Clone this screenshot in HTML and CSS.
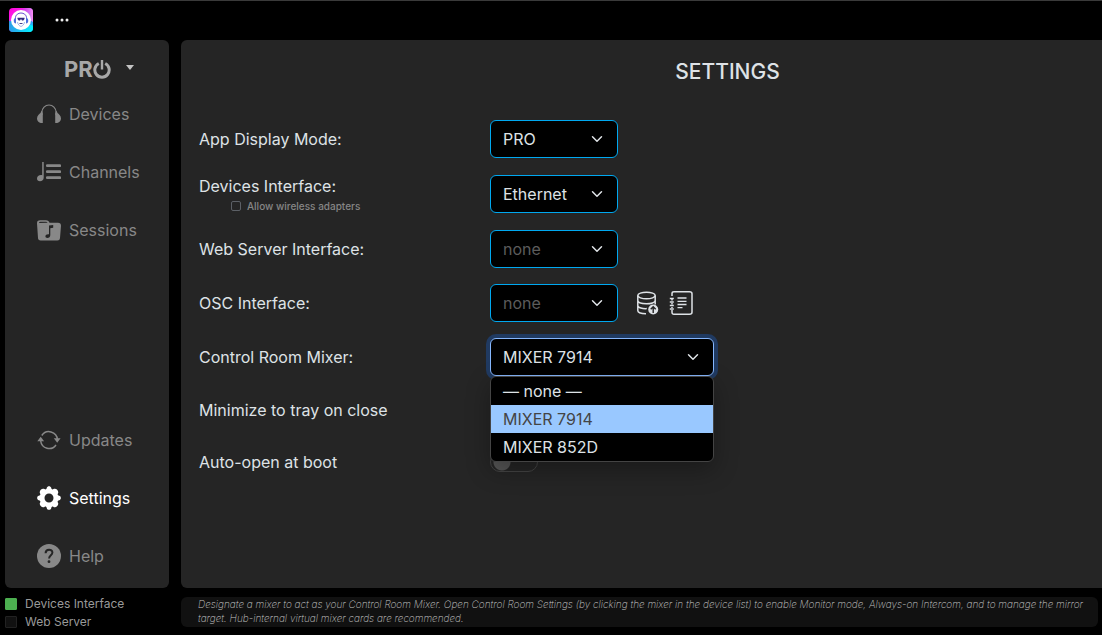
FILE: index.html
```html
<!DOCTYPE html>
<html lang="en">
<head>
<meta charset="utf-8">
<title>Settings</title>
<link rel="stylesheet" href="styles.css">
</head>
<body>
<header class="topbar">
  <svg class="logo" viewBox="0 0 24 24" aria-hidden="true">
    <defs>
      <linearGradient id="brand" x1="0" y1="0" x2="1" y2="1">
        <stop offset="0" stop-color="#ff00d8"/><stop offset=".28" stop-color="#fa20e8"/>
        <stop offset=".65" stop-color="#4c72f5"/><stop offset="1" stop-color="#00f4ff"/>
      </linearGradient>
      <linearGradient id="edge" x1="0" y1="0" x2="1" y2="0">
        <stop offset=".35" stop-color="#ff68f5" stop-opacity="0"/><stop offset="1" stop-color="#ff8cf2"/>
      </linearGradient>
      <linearGradient id="base" x1="0" y1="0" x2="1" y2="0">
        <stop offset="0" stop-color="#2d9be8"/><stop offset="1" stop-color="#00f4ff"/>
      </linearGradient>
    </defs>
    <rect width="24" height="24" rx="4" fill="url(#brand)"/>
    <path d="M8 0h12a4 4 0 0 1 4 4v10L12 6Z" fill="url(#edge)"/>
    <path d="M0 13v7a4 4 0 0 0 4 4h16a4 4 0 0 0 4-4v-2L12 12Z" fill="url(#base)"/>
    <circle cx="12" cy="12" r="10" fill="#fff"/>
    <path d="M6.500 11C5.500 3 18.500 3 17.500 11" fill="none" stroke="#6a4fd0" stroke-width="1"/>
    <path d="M7 9.500v6C4 15.500 4 10 7 9.500ZM17 9.500v6c3 0 3-5.500 0-6Z" fill="#4d6fdc"/>
    <path d="M8.500 9.800h7v1.200l-1.200 1.500h-1.300l-1-1.500-1 1.500H9.700L8.500 11Z" fill="#352b82"/>
    <path d="M8.500 14c.3 2.500 2 4 3.500 4.500 1.500-.5 3.200-2 3.500-4.500" fill="none" stroke="#7a96dc" stroke-width=".7"/>
    <path d="M10.500 15.500h3" stroke="#352b82" stroke-width=".9"/>
  </svg>
  <button class="more" aria-label="More">
    <svg width="14" height="4" viewBox="0 0 14 4" fill="#eee"><circle cx="2" cy="2" r="1.500"/><circle cx="7" cy="2" r="1.500"/><circle cx="12" cy="2" r="1.500"/></svg>
  </button>
</header>
<div class="body">
  <nav class="sidebar">
    <button class="mode"><span class="mode-name">PR</span><svg class="power" viewBox="0 0 18 19" aria-label="O" fill="none" stroke="#a8a8a8" stroke-width="3"><path d="M5.800 3.500a7.200 7.200 0 1 0 6.400 0"/><path d="M9 0v9.500" stroke-width="2.400"/></svg><svg class="caret" viewBox="0 0 8 5" fill="#c4c4c4"><path d="M0 0h8L4 5Z"/></svg></button>
    <a class="item" href="#devices"><svg viewBox="0 0 24 24" fill="#888"><path d="M5 13V10a7 7 0 0 1 14 0v3" fill="none" stroke="#888" stroke-width="1.200"/><path d="M5.800 11.500V21C2.500 21.500 0 19 0 16.500 0 13.500 2.500 12 3.500 11L4.500 8.500ZM18.200 11.500V21c3.300.5 5.800-2 5.800-4.500 0-3-2.500-4.500-3.500-5.500l-1-2.500Z"/></svg>Devices</a>
    <a class="item" href="#channels"><svg viewBox="0 0 24 24" fill="#888"><path d="M5.200 2h1.500v15.500c0 2.500-1.700 3.700-3.700 3.700-1.800 0-3-1-3-2.700 0-2.300 2.500-4 5.200-3.300Z"/><path d="M10.300 5.700h12.500M10.300 11.700h12.500M10.300 17.700h12.500" stroke="#888" stroke-width="2.800" stroke-linecap="round"/></svg>Channels</a>
    <a class="item" href="#sessions"><svg viewBox="0 0 24 24"><path d="M0 5.200C0 3 1 2.200 3 2.200h6c2 0 3 1 3.500 2.600H21c2 0 3 1 3 3L23 20c-.2 1.700-1 2.500-2.700 2.500H3.700C2 22.500 1 21.500 1 20Z" fill="#888"/><path d="M2 5c.2-1 1-1.200 2-1.200h4.500c1 0 1.700.3 2 1Z" fill="#252525"/><path d="M12 7.500l4.200-.5v2.800l-2.900.4V17c0 2-1.300 3-2.900 3-1.300 0-2-.7-2-1.700 0-1.500 1.800-2.500 3.600-2Z" fill="#252525"/></svg>Sessions</a>
    <div class="spring"></div>
    <a class="item" href="#updates"><svg viewBox="0 0 24 24" fill="#888"><path d="M3.700 13A8.500 8.500 0 0 0 19 17M4.800 7.500A8.500 8.500 0 0 1 20.400 11.500" fill="none" stroke="#888" stroke-width="1.500"/><path d="M.3 13.200 3.700 8.700l3.400 4.500ZM16.800 10.200h6.800l-3.400 4.600Z"/></svg>Updates</a>
    <a class="item active" href="#settings"><svg viewBox="0 0 24 24" fill="#fff"><path fill-rule="evenodd" d="M9.800 1.800C10.300-.4 13.700-.4 14.200 1.800c.2 1.300 1.200 2 2.300 1.300 2.500-1.500 5.900 1.900 4.400 4.400-.7 1.100 0 2.100 1.300 2.300 2.200.5 2.200 3.900 0 4.400-1.300.2-2 1.200-1.300 2.300 1.500 2.500-1.900 5.900-4.400 4.400-1.100-.7-2.100 0-2.300 1.300-.5 2.200-3.900 2.200-4.400 0-.2-1.300-1.200-2-2.300-1.300-2.500 1.500-5.900-1.900-4.400-4.400.7-1.100 0-2.100-1.300-2.300-2.200-.5-2.200-3.900 0-4.400 1.300-.2 2-1.200 1.300-2.300C1.600 5 5 1.600 7.500 3.100 8.600 3.800 9.600 3.100 9.800 1.800ZM12 7.500a4.500 4.500 0 1 0 0 9 4.500 4.500 0 0 0 0-9Z"/></svg>Settings</a>
    <a class="item" href="#help"><svg viewBox="0 0 24 24"><circle cx="12" cy="12" r="12" fill="#888"/><path d="M8.600 9.200c0-4.600 6.800-4.500 6.800-.6 0 2.800-3.300 2.700-3.300 6" fill="none" stroke="#252525" stroke-width="2"/><circle cx="12" cy="17.700" r="1.400" fill="#252525"/></svg>Help</a>
  </nav>
  <main class="panel">
    <h1 class="title">SETTINGS</h1>
    <form class="rows">
      <div class="row">
        <label class="name" for="mode">App Display Mode:</label>
        <select id="mode" class="select"><option>PRO</option></select>
      </div>
      <div class="row">
        <div class="name">
          <label class="main-label" for="devices">Devices Interface:</label>
          <label class="sub"><input type="checkbox" class="check">Allow wireless adapters</label>
        </div>
        <select id="devices" class="select"><option>Ethernet</option></select>
      </div>
      <div class="row">
        <label class="name" for="web">Web Server Interface:</label>
        <select id="web" class="select empty"><option>none</option></select>
      </div>
      <div class="row">
        <label class="name" for="osc">OSC Interface:</label>
        <select id="osc" class="select empty"><option>none</option></select>
        <div class="tools">
          <button type="button" class="tool" aria-label="Upload data"><svg viewBox="0 0 24 24" fill="none" stroke="#dee2e6" stroke-width="1.500"><ellipse cx="10.500" cy="4.500" rx="8.700" ry="3.300"/><path d="M1.800 4.500v15c0 2 4 3.200 8.200 3.200M19.200 4.500v9M1.800 9.500c0 4.300 17.400 4.300 17.400 0M1.800 14.500c0 2.500 5 3.300 9 3.100"/><circle cx="17.200" cy="18.500" r="5" fill="#dee2e6" stroke="none"/><path d="M17.200 22v-6M14.700 18.200l2.500-2.500 2.500 2.500" stroke="#252525" stroke-width="1.400"/></svg></button>
          <button type="button" class="tool" aria-label="Log"><svg viewBox="0 0 24 24" fill="none" stroke="#dee2e6" stroke-width="1.500"><path d="M3 5V2.500C3 1.300 3.700.8 5 .8h15.500c1.500 0 2.500.7 2.500 2v18.400c0 1.300-1 2-2.500 2H5c-1.300 0-2-.6-2-2V19M3 7.500v2M3 12v1.500M3 16v1"/><path d="M.8 7.500h4M.8 11h4M.8 14.500h4M.8 18h4" stroke-width="1.300"/><path d="M8.500 7h9M8.500 10.300h9M8.500 13.500h9M8.500 16.700h5" stroke-width="1.300"/></svg></button>
        </div>
      </div>
      <div class="row">
        <label class="name" for="mixer">Control Room Mixer:</label>
        <div class="combo">
          <select id="mixer" class="select wide open"><option>MIXER 7914</option></select>
          <div class="menu" role="listbox" aria-label="Control Room Mixer">
            <button type="button" class="option" role="option">— none —</button>
            <button type="button" class="option selected" role="option" aria-selected="true">MIXER 7914</button>
            <button type="button" class="option" role="option">MIXER 852D</button>
          </div>
        </div>
      </div>
      <div class="row short">
        <label class="name" for="tray">Minimize to tray on close</label>
        <input id="tray" type="checkbox" class="toggle">
      </div>
      <div class="row short">
        <label class="name" for="boot">Auto-open at boot</label>
        <input id="boot" type="checkbox" class="toggle">
      </div>
    </form>
  </main>
</div>
<footer class="footer">
  <div class="statuses">
    <div class="status"><span class="lamp on"></span>Devices Interface</div>
    <div class="status"><span class="lamp"></span>Web Server</div>
  </div>
  <p class="hint">Designate a mixer to act as your Control Room Mixer. Open Control Room Settings (by clicking the mixer in the device list) to enable Monitor mode, Always-on Intercom, and to manage the mirror target. Hub-internal virtual mixer cards are recommended.</p>
</footer>
</body>
</html>
```
FILE: styles.css
```css
* { box-sizing: border-box; }
body {
  margin: 0;
  min-height: 100vh;
  display: flex;
  flex-direction: column;
  background: #000;
  color: #dee2e6;
  font: 16px/24px Inter, "Liberation Sans", sans-serif;
}
button { background: none; border: 0; padding: 0; color: inherit; font: inherit; }
.topbar {
  display: flex;
  align-items: center;
  gap: 22px;
  height: 40px;
  padding: 0 0 1px 9px;
  border-top: 1px solid #3a3a3a;
}
.logo { width: 24px; height: 24px; }
.more { display: flex; }
.body { flex: 1; display: flex; gap: 12px; padding-left: 5px; }
.sidebar {
  display: flex;
  flex-direction: column;
  width: 164px;
  padding: 15px 0 3px 32px;
  background: #252525;
  border-radius: 6px;
}
.mode {
  display: flex;
  align-items: center;
  height: 28px;
  margin-bottom: 2px;
  padding-left: 27px;
  color: #a8a8a8;
}
.mode-name { font: 700 22px/28px Inter, "Liberation Sans", sans-serif; }
.power { width: 18px; height: 19px; }
.caret { width: 8px; height: 5px; margin: 0 0 3px 15px; }
.item {
  display: flex;
  align-items: center;
  gap: 8px;
  height: 58px;
  color: #888;
  text-decoration: none;
}
.item svg { width: 24px; height: 24px; }
.item.active { color: #fff; }
.spring { flex: 1; }
.panel {
  flex: 1;
  padding: 18px 0 0 18px;
  background: #252525;
  border-radius: 6px 0 0 6px;
}
.title {
  margin: 0 0 34px;
  padding-left: 154px;
  font-size: 21px;
  line-height: 28px;
  font-weight: 500;
  text-align: center;
}
.rows { display: flex; flex-direction: column; gap: 16px; }
.row { display: flex; align-items: center; }
.short { height: 36px; }
.name { width: 291px; }
.main-label { display: block; }
.sub {
  display: flex;
  align-items: center;
  gap: 6px;
  padding-left: 32px;
  font-size: 10px;
  font-weight: 500;
  line-height: 16px;
  color: #868686;
}
.check {
  appearance: none;
  width: 10px;
  height: 10px;
  margin: 0;
  border: 1px solid #5c6066;
  border-radius: 2px;
}
.select {
  appearance: none;
  display: block;
  width: 128px;
  height: 38px;
  padding: 0 12px;
  border: 1px solid #00a8f0;
  border-radius: 6px;
  color: #dee2e6;
  font: inherit;
  background: #000 url("data:image/svg+xml,%3Csvg xmlns='http://www.w3.org/2000/svg' viewBox='0 0 16 16'%3E%3Cpath fill='none' stroke='%23dee2e6' stroke-linecap='round' stroke-linejoin='round' stroke-width='2' d='m2 5 6 6 6-6'/%3E%3C/svg%3E") no-repeat right 14px center / 12px 12px;
}
.empty { color: #5c5c5c; }
.wide { width: 224px; }
.open { border-color: #86b7fe; box-shadow: 0 0 0 4px #203a61; }
.combo { position: relative; }
.menu {
  position: absolute;
  z-index: 1;
  top: 38px;
  left: 0;
  width: 224px;
  overflow: hidden;
  background: #000;
  border: 1px solid #444;
  border-radius: 6px;
  box-shadow: 0 8px 24px rgba(0, 0, 0, .3);
}
.option {
  display: block;
  width: 100%;
  height: 28px;
  padding: 0 12px;
  text-align: left;
}
.selected { background: #99c8ff; color: #444; }
.tools { display: flex; gap: 9px; padding-left: 18px; }
.tool, .tool svg { display: block; width: 24px; height: 24px; }
.toggle {
  appearance: none;
  width: 48px;
  height: 20px;
  margin: 0;
  border: 1px solid #444;
  border-radius: 10px;
  background: radial-gradient(circle at 11px 50%, #555 8px, transparent 9px);
}
.footer { display: flex; gap: 12px; height: 47px; padding: 7px 4px 0 5px; }
.statuses { width: 164px; font-size: 12px; line-height: 18px; color: #999; }
.status { display: flex; align-items: center; gap: 8px; }
.lamp { width: 12px; height: 12px; border: 1px solid #222; border-radius: 1px; background: #111; }
.on { border-color: #4caf50; background: #4caf50; }
.hint {
  flex: 1;
  height: 30px;
  margin: 2px 0 0;
  padding: 0 0 0 17px;
  border-radius: 6px;
  background: #111;
  color: #c4c4c4;
  font-size: 10px;
  font-style: italic;
  font-weight: 200;
  line-height: 14px;
}
```
